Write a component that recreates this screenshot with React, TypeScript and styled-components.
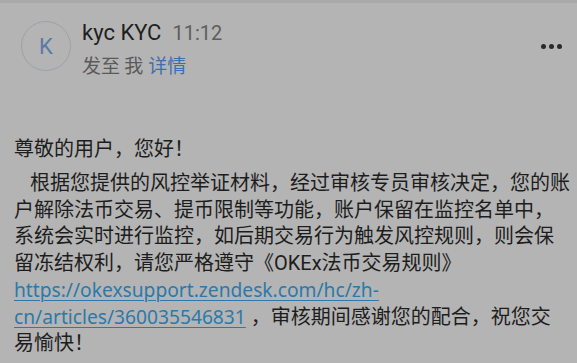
import React from "react";
import styled, { createGlobalStyle } from "styled-components";

const Global = createGlobalStyle`
  html, body { margin: 0; padding: 0; background: #b4b4b4; }
  body { font-family: Roboto, "Noto Sans CJK SC", sans-serif; -webkit-font-smoothing: antialiased; }
`;

const Page = styled.div`
  width: 577px;
  height: 363px;
  overflow: hidden;
  background: #b4b4b4;
`;

const TopStrip = styled.div`
  height: 3px;
  background: #a9a9a9;
`;

const Header = styled.div`
  display: flex;
  align-items: flex-start;
  padding: 18px 15px 0 21px;
  height: 59px;
`;

const Avatar = styled.div`
  width: 48px;
  height: 48px;
  border: 1px solid #9ca1a9;
  border-radius: 50%;
  display: flex;
  align-items: center;
  justify-content: center;
  font-family: Roboto, sans-serif;
  font-size: 22px;
  color: #5b7aa8;
  flex-shrink: 0;
`;

const Meta = styled.div`
  margin-left: 11px;
  margin-top: -1px;
  display: flex;
  flex-direction: column;
`;

const NameRow = styled.div`
  display: flex;
  align-items: baseline;
  line-height: 26px;
  white-space: nowrap;
`;

const Name = styled.span`
  font-size: 22px;
  color: #1f1f1f;
`;

const Time = styled.span`
  font-size: 20px;
  color: #5e5e5e;
  margin-left: 11px;
`;

const SubRow = styled.div`
  margin-top: 7px;
  font-family: "Noto Sans CJK SC", sans-serif;
  font-size: 19px;
  line-height: 24px;
  color: #5a5a5a;
  white-space: nowrap;
`;

const Detail = styled.span`
  color: #3d6fae;
  margin-left: 5px;
`;

const Dots = styled.div`
  margin-left: auto;
  height: 50px;
  display: flex;
  align-items: center;
  gap: 3px;
`;

const Dot = styled.span`
  width: 5px;
  height: 5px;
  border-radius: 50%;
  background: #2a2a2a;
`;

const Body = styled.div`
  margin-top: 56px;
  padding-left: 14px;
  font-size: 20px;
  line-height: 26.7px;
  color: #1d1d1d;
  white-space: nowrap;
`;

const Greeting = styled.p`
  margin: 0 0 7.3px 0;
`;

const Paragraph = styled.p`
  margin: 0;
  text-indent: 16px;
`;

const Link = styled.a`
  font-family: "Noto Sans", Roboto, sans-serif;
  font-size: 19.2px;
  color: #2c79aa;
  text-decoration: underline;
  text-decoration-thickness: 1px;
  text-underline-offset: 3px;
`;

export default function App() {
  return (
    <Page>
      <Global />
      <TopStrip />
      <Header>
        <Avatar>K</Avatar>
        <Meta>
          <NameRow>
            <Name>kyc KYC</Name>
            <Time>11:12</Time>
          </NameRow>
          <SubRow>
            发至 我<Detail>详情</Detail>
          </SubRow>
        </Meta>
        <Dots>
          <Dot />
          <Dot />
          <Dot />
        </Dots>
      </Header>
      <Body>
        <Greeting>尊敬的用户，您好！</Greeting>
        <Paragraph>
          根据您提供的风控举证材料，经过审核专员审核决定，您的账
          <br />
          户解除法币交易、提币限制等功能，账户保留在监控名单中，
          <br />
          系统会实时进行监控，如后期交易行为触发风控规则，则会保
          <br />
          留冻结权利，请您严格遵守《OKEx法币交易规则》
          <br />
          <Link href="#">https://okexsupport.zendesk.com/hc/zh-</Link>
          <br />
          <Link href="#">cn/articles/360035546831</Link> ，审核期间感谢您的配合，祝您交
          <br />
          易愉快！
        </Paragraph>
      </Body>
    </Page>
  );
}
